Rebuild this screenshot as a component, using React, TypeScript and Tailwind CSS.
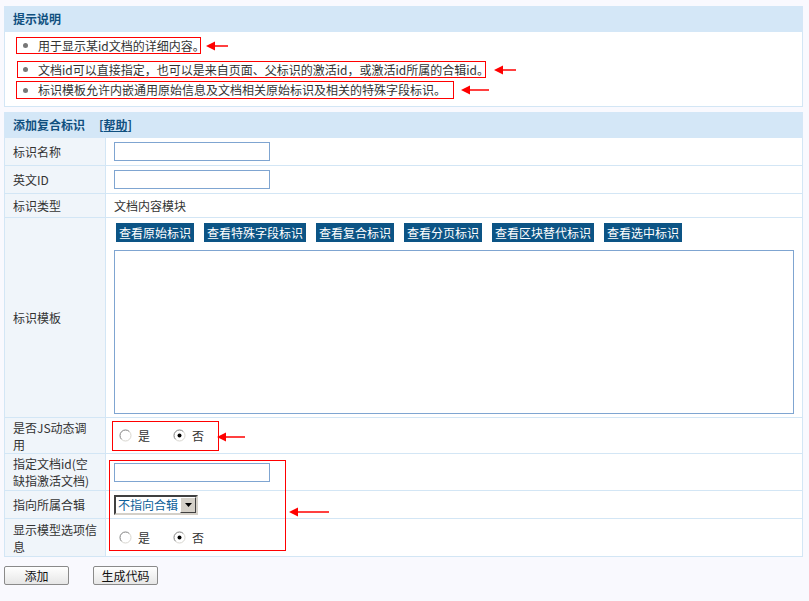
import React from "react";

const FONT = '"Noto Sans CJK SC", "Liberation Sans", sans-serif';

function Arrow({ w }: { w: number }) {
  return (
    <svg width={w} height={10} viewBox={`0 0 ${w} 10`} className="block">
      <line x1={6} y1={5} x2={w} y2={5} stroke="#ff0000" strokeWidth={1.5} />
      <polygon points={`0,5 9,0.5 9,9.5`} fill="#ff0000" />
    </svg>
  );
}

function Radio({ checked }: { checked?: boolean }) {
  return (
    <svg width={13} height={13} viewBox="0 0 13 13" className="block">
      <circle cx={6.5} cy={6.5} r={5.5} fill="#ffffff" />
      <path d="M2.6 10.4 A5.5 5.5 0 0 1 10.4 2.6" stroke="#808080" strokeWidth={1} fill="none" />
      <path d="M10.4 2.6 A5.5 5.5 0 0 1 2.6 10.4" stroke="#d8d6d0" strokeWidth={1} fill="none" />
      {checked && <circle cx={6.5} cy={6.5} r={2} fill="#000000" />}
    </svg>
  );
}

function RadioPair() {
  return (
    <div className="flex items-center">
      <div className="ml-[5px]"><Radio /></div>
      <span className="ml-[6px]">是</span>
      <div className="ml-[23px]"><Radio checked /></div>
      <span className="ml-[6px]">否</span>
    </div>
  );
}

function Row({
  label,
  h,
  children,
  last,
  align = "center",
}: {
  label: React.ReactNode;
  h: string;
  children?: React.ReactNode;
  last?: boolean;
  align?: "center" | "start";
}) {
  return (
    <div className={`flex ${h} ${last ? "" : "border-b border-[#d3e6f5]"}`}>
      <div className="w-[101px] shrink-0 bg-[#f0f5fa] border-r border-[#d3e6f5] pl-[8px] pr-[7px] flex items-center leading-[17px] text-[#333]">
        <div>{label}</div>
      </div>
      <div className={`flex-1 flex ${align === "center" ? "items-center" : "items-start"} bg-white pl-[8px] pr-[8px]`}>
        {children}
      </div>
    </div>
  );
}

function TextInput() {
  return <div className="w-[156px] h-[19px] border border-[#7fa5d1] bg-white" />;
}

const templateButtons = [
  "查看原始标识",
  "查看特殊字段标识",
  "查看复合标识",
  "查看分页标识",
  "查看区块替代标识",
  "查看选中标识",
];

export default function App() {
  return (
    <div
      className="relative w-[809px] h-[601px] bg-[#f9f9fe] text-[12px] text-[#333] overflow-hidden"
      style={{ fontFamily: FONT }}
    >
      <div className="pt-[6px] pl-[4px] w-[803px]">
        {/* Panel 1 */}
        <div>
          <div className="h-[26px] bg-[#d4e7f7] flex items-center pl-[9px] font-bold text-[#10507f]">
            提示说明
          </div>
          <div className="bg-white border-x border-b border-[#d3e6f5] h-[75px] pt-[5px]">
            <div className="flex items-center ml-[11px] h-[17px]">
              <div className="flex items-center h-[17px] w-[185px] border border-[#ff0000] pl-[6px] whitespace-nowrap">
                <span className="w-[5px] h-[5px] rounded-full bg-[#777] shrink-0" />
                <span className="ml-[10px]">用于显示某id文档的详细内容。</span>
              </div>
              <div className="ml-[5px]"><Arrow w={22} /></div>
            </div>
            <div className="flex items-center ml-[12px] h-[17px] mt-[7px]">
              <div className="flex items-center h-[17px] w-[469px] border border-[#ff0000] pl-[5px] whitespace-nowrap">
                <span className="w-[5px] h-[5px] rounded-full bg-[#777] shrink-0" />
                <span className="ml-[10px]">文档id可以直接指定，也可以是来自页面、父标识的激活id，或激活id所属的合辑id。</span>
              </div>
              <div className="ml-[8px]"><Arrow w={22} /></div>
            </div>
            <div className="flex items-center ml-[11px] h-[18px] mt-[3px]">
              <div className="flex items-center h-[18px] w-[438px] border border-[#ff0000] pl-[6px] whitespace-nowrap">
                <span className="w-[5px] h-[5px] rounded-full bg-[#777] shrink-0" />
                <span className="ml-[10px]">标识模板允许内嵌通用原始信息及文档相关原始标识及相关的特殊字段标识。</span>
              </div>
              <div className="ml-[7px]"><Arrow w={28} /></div>
            </div>
          </div>
        </div>

        {/* Panel 2 */}
        <div className="mt-[5px]">
          <div className="h-[26px] bg-[#d4e7f7] flex items-center pl-[9px] font-bold text-[#10507f]">
            <span>添加复合标识</span>
            <span className="ml-[14px]">
              [<span className="underline">帮助</span>]
            </span>
          </div>
          <div className="border-x border-b border-[#d3e6f5]">
            <Row label="标识名称" h="h-[28px]">
              <TextInput />
            </Row>
            <Row label="英文ID" h="h-[28px]">
              <TextInput />
            </Row>
            <Row label="标识类型" h="h-[24px]">
              <span>文档内容模块</span>
            </Row>
            <Row label="标识模板" h="h-[200px]" align="start">
              <div className="flex flex-col w-full pt-[5px]">
                <div className="flex gap-[10px] ml-[2px]">
                  {templateButtons.map((b) => (
                    <span
                      key={b}
                      className="h-[19px] px-[3px] bg-[#0c5485] text-white flex items-center leading-none"
                    >
                      {b}
                    </span>
                  ))}
                </div>
                <div className="mt-[8px] h-[164px] w-full border border-[#7fa5d1] bg-white" />
              </div>
            </Row>
            <Row label="是否JS动态调用" h="h-[36px]">
              <RadioPair />
            </Row>
            <Row label="指定文档id(空缺指激活文档)" h="h-[37px]">
              <TextInput />
            </Row>
            <Row label="指向所属合辑" h="h-[28px]">
              <div className="flex h-[20px] w-[84px] border-2 border-t-[#404040] border-l-[#404040] border-b-[#d4d0c8] border-r-[#d4d0c8] bg-white">
                <span className="flex-1 flex items-center pl-[2px] text-[#0e5f99] leading-none">不指向合辑</span>
                <span className="w-[16px] bg-[#d4d0c8] border border-t-white border-l-white border-b-[#404040] border-r-[#404040] flex items-center justify-center">
                  <svg width="7" height="4" viewBox="0 0 7 4">
                    <polygon points="0,0 7,0 3.5,4" fill="#000" />
                  </svg>
                </span>
              </div>
            </Row>
            <Row label="显示模型选项信息" h="h-[37px]" last>
              <RadioPair />
            </Row>
          </div>
        </div>

        <div className="flex mt-[9px] gap-[24px]">
          {["添加", "生成代码"].map((t) => (
            <button
              key={t}
              className="w-[65px] h-[19px] rounded-[2px] border border-[#8a8a8a] bg-gradient-to-b from-white to-[#e6e6e6] text-[#111] text-[12px] leading-none flex items-center justify-center"
              style={{ fontFamily: FONT }}
            >
              {t}
            </button>
          ))}
        </div>
      </div>

      {/* Annotations over the form */}
      <div className="absolute left-[112px] top-[421px] w-[107px] h-[30px] border border-[#ff0000]" />
      <div className="absolute left-[217px] top-[432px]"><Arrow w={28} /></div>
      <div className="absolute left-[109px] top-[460px] w-[177px] h-[91px] border border-[#ff0000]" />
      <div className="absolute left-[289px] top-[507px]"><Arrow w={40} /></div>
    </div>
  );
}
